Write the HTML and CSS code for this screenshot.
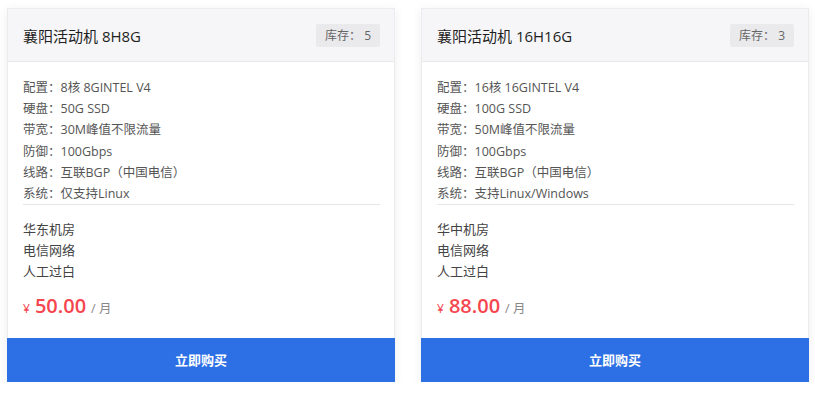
FILE: index.html
```html
<!DOCTYPE html>
<html lang="zh">
<head>
<meta charset="utf-8">
<link rel="stylesheet" href="styles.css">
</head>
<body>
<div class="grid">
  <div class="card">
    <div class="card-head">
      <span class="title">襄阳活动机 8H8G</span>
      <span class="stock">库存： 5</span>
    </div>
    <div class="card-body">
      <ul class="specs">
        <li>配置：8核 8GINTEL V4</li>
        <li>硬盘：50G SSD</li>
        <li>带宽：30M峰值不限流量</li>
        <li>防御：100Gbps</li>
        <li>线路：互联BGP（中国电信）</li>
        <li>系统：仅支持Linux</li>
      </ul>
      <ul class="extras">
        <li>华东机房</li>
        <li>电信网络</li>
        <li>人工过白</li>
      </ul>
      <div class="price"><span class="cur">¥</span><span class="amount">50.00</span><span class="unit">/ 月</span></div>
    </div>
    <a class="buy">立即购买</a>
  </div>
  <div class="card">
    <div class="card-head">
      <span class="title">襄阳活动机 16H16G</span>
      <span class="stock">库存： 3</span>
    </div>
    <div class="card-body">
      <ul class="specs">
        <li>配置：16核 16GINTEL V4</li>
        <li>硬盘：100G SSD</li>
        <li>带宽：50M峰值不限流量</li>
        <li>防御：100Gbps</li>
        <li>线路：互联BGP（中国电信）</li>
        <li>系统：支持Linux/Windows</li>
      </ul>
      <ul class="extras">
        <li>华中机房</li>
        <li>电信网络</li>
        <li>人工过白</li>
      </ul>
      <div class="price"><span class="cur">¥</span><span class="amount">88.00</span><span class="unit">/ 月</span></div>
    </div>
    <a class="buy">立即购买</a>
  </div>
</div>
</body>
</html>
```
FILE: styles.css
```css
* { box-sizing: border-box; }
body {
  margin: 0;
  background: #fff;
  font-family: "Open Sans", "Noto Sans CJK SC", sans-serif;
  color: #333;
}
.grid {
  display: grid;
  grid-template-columns: 388px 388px;
  column-gap: 26px;
  padding: 8px 0 0 7px;
}
.card {
  background: #fff;
  border: 1px solid #ececee;
  box-shadow: 0 2px 10px rgba(0,0,0,0.07);
  display: flex;
  flex-direction: column;
  height: 374px;
}
.card-head {
  height: 53px;
  background: #f6f6f8;
  border-bottom: 1px solid #e8e8ea;
  display: flex;
  align-items: center;
  justify-content: space-between;
  padding: 0 14px 0 15px;
}
.title {
  font-size: 15px;
  font-weight: 400;
  color: #1f1f1f;
}
.stock {
  background: #eaeaec;
  color: #666;
  font-size: 12px;
  height: 23px;
  line-height: 23px;
  padding: 0 9px;
  border-radius: 2px;
}
.card-body {
  flex: 1;
  padding: 15px 14px 0 15px;
}
ul { list-style: none; margin: 0; padding: 0; }
.specs {
  font-size: 12.5px;
  line-height: 21.2px;
  color: #555;
  border-bottom: 1px solid #e6e6e6;
  margin-bottom: -1px;
}
.extras {
  font-size: 13px;
  line-height: 20.7px;
  color: #444;
  padding-top: 15px;
}
.price {
  margin-top: 11px;
  display: flex;
  align-items: baseline;
  color: #f5464f;
}
.cur { font-size: 12px; margin-right: 5px; }
.amount { font-size: 20px; font-weight: 600; margin-right: 5px; }
.unit { font-size: 12.5px; color: #888; }
.buy {
  display: block;
  height: 44px;
  line-height: 44px;
  text-align: center;
  background: #2d6fe4;
  color: #fff;
  font-size: 13px;
  font-weight: 700;
  margin: 0 -1px -1px -1px;
}
```
